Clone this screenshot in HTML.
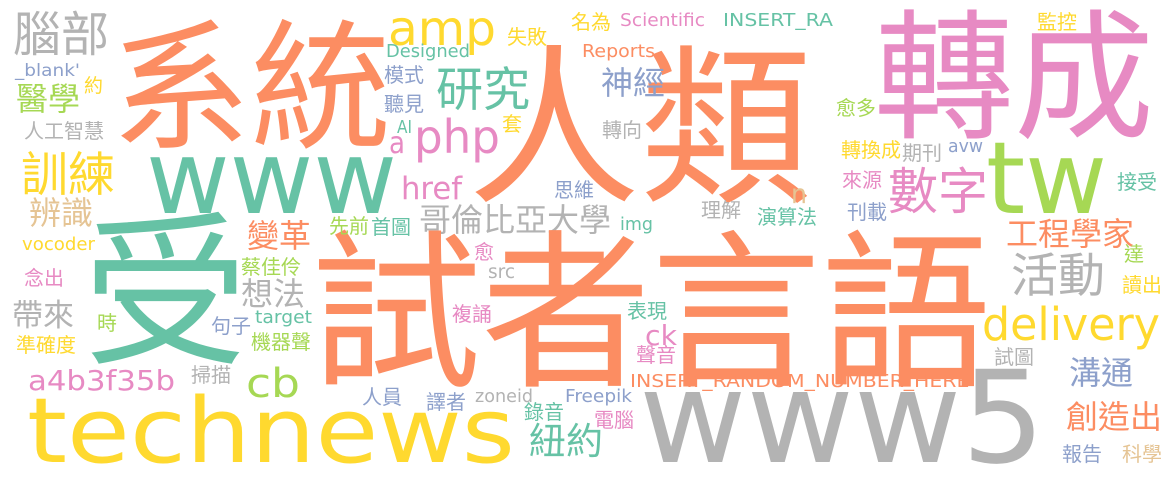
<!DOCTYPE html>
<html><head><meta charset="utf-8"><style>
html,body{margin:0;padding:0;background:#fff;}
svg{display:block}
.c{font-family:"Noto Sans CJK TC","Noto Sans CJK SC",sans-serif;}
.l{font-family:"DejaVu Sans","Liberation Sans",sans-serif;}
.o{fill:#fc8d62}.t{fill:#66c2a5}.b{fill:#8da0cb}.p{fill:#e78ac3}.g{fill:#a6d854}.y{fill:#ffd92f}.n{fill:#e5c494}.r{fill:#b3b3b3}
</style></head><body>
<svg width="1175" height="482" viewBox="0 0 1175 482" xmlns="http://www.w3.org/2000/svg">
<g class="c">
<text class="r" x="13" y="51" font-size="48">腦部</text>
<text class="o" x="111" y="137" font-size="140">系統</text>
<text class="y" x="507" y="44" font-size="20">失敗</text>
<text class="o" x="468" y="189" font-size="172">人類</text>
<text class="y" x="571" y="29" font-size="20">名為</text>
<text class="p" x="874" y="127" font-size="140">轉成</text>
<text class="y" x="1037" y="29" font-size="20">監控</text>
<text class="y" x="84" y="92" font-size="19">約</text>
<text class="g" x="16" y="110" font-size="32">醫學</text>
<text class="t" x="436" y="106" font-size="47">研究</text>
<text class="b" x="384" y="82" font-size="20">模式</text>
<text class="b" x="384" y="111" font-size="20">聽見</text>
<text class="b" x="601" y="94" font-size="32">神經</text>
<text class="r" x="24" y="138" font-size="20">人工智慧</text>
<text class="y" x="502" y="131" font-size="20">套</text>
<text class="g" x="836" y="115" font-size="20">愈多</text>
<text class="r" x="602" y="137" font-size="20">轉向</text>
<text class="y" x="21" y="191" font-size="47">訓練</text>
<text class="y" x="841" y="157" font-size="20">轉換成</text>
<text class="r" x="902" y="160" font-size="20">期刊</text>
<text class="p" x="888" y="209" font-size="50">數字</text>
<text class="p" x="842" y="187" font-size="20">來源</text>
<text class="t" x="1117" y="189" font-size="20">接受</text>
<text class="b" x="554" y="197" font-size="20">思維</text>
<text class="n" x="29" y="224" font-size="32">辨識</text>
<text class="r" x="419" y="231" font-size="32">哥倫比亞大學</text>
<text class="r" x="701" y="217" font-size="20">理解</text>
<text class="t" x="757" y="224" font-size="20">演算法</text>
<text class="b" x="847" y="219" font-size="20">刊載</text>
<text class="o" x="1006" y="245" font-size="32">工程學家</text>
<text class="t" x="83" y="351" font-size="165">受</text>
<text class="o" x="311" y="373" font-size="170">試者言語</text>
<text class="g" x="329" y="233" font-size="20">先前</text>
<text class="t" x="371" y="234" font-size="20">首圖</text>
<text class="o" x="247" y="247" font-size="32">變革</text>
<text class="r" x="1011" y="292" font-size="47">活動</text>
<text class="g" x="1124" y="261" font-size="20">達</text>
<text class="p" x="474" y="259" font-size="20">愈</text>
<text class="y" x="1122" y="292" font-size="20">讀出</text>
<text class="g" x="241" y="274" font-size="20">蔡佳伶</text>
<text class="p" x="24" y="285" font-size="20">念出</text>
<text class="r" x="241" y="305" font-size="32">想法</text>
<text class="t" x="627" y="318" font-size="20">表現</text>
<text class="r" x="12" y="326" font-size="31">帶來</text>
<text class="g" x="97" y="330" font-size="20">時</text>
<text class="p" x="452" y="321" font-size="20">複誦</text>
<text class="b" x="211" y="333" font-size="20">句子</text>
<text class="y" x="16" y="352" font-size="20">準確度</text>
<text class="g" x="251" y="349" font-size="20">機器聲</text>
<text class="p" x="636" y="362" font-size="20">聲音</text>
<text class="r" x="994" y="364" font-size="20">試圖</text>
<text class="b" x="1069" y="384" font-size="32">溝通</text>
<text class="r" x="191" y="382" font-size="20">掃描</text>
<text class="b" x="362" y="404" font-size="20">人員</text>
<text class="b" x="426" y="409" font-size="20">譯者</text>
<text class="t" x="524" y="419" font-size="20">錄音</text>
<text class="p" x="594" y="427" font-size="20">電腦</text>
<text class="o" x="1066" y="428" font-size="32">創造出</text>
<text class="t" x="529" y="454" font-size="37">紐約</text>
<text class="b" x="1062" y="461" font-size="20">報告</text>
<text class="n" x="1122" y="461" font-size="20">科學</text>
</g>
<g class="l">
<text class="y" x="388" y="45" font-size="48" textLength="108" lengthAdjust="spacingAndGlyphs">amp</text>
<text class="t" x="386" y="57" font-size="18" textLength="84" lengthAdjust="spacingAndGlyphs">Designed</text>
<text class="p" x="620" y="26" font-size="18" textLength="85" lengthAdjust="spacingAndGlyphs">Scientific</text>
<text class="t" x="723" y="26" font-size="18" textLength="110" lengthAdjust="spacingAndGlyphs">INSERT_RA</text>
<text class="o" x="582" y="57" font-size="18" textLength="73" lengthAdjust="spacingAndGlyphs">Reports</text>
<text class="b" x="15" y="76" font-size="17" textLength="65" lengthAdjust="spacingAndGlyphs">_blank'</text>
<text class="t" x="397" y="133" font-size="18" textLength="15" lengthAdjust="spacingAndGlyphs">AI</text>
<text class="p" x="389" y="153" font-size="30" textLength="16" lengthAdjust="spacingAndGlyphs">a</text>
<text class="p" x="414" y="153" font-size="46" textLength="86" lengthAdjust="spacingAndGlyphs">php</text>
<text class="t" x="146" y="213" font-size="102" textLength="251" lengthAdjust="spacingAndGlyphs">www</text>
<text class="p" x="401" y="199" font-size="31" textLength="61" lengthAdjust="spacingAndGlyphs">href</text>
<text class="b" x="948" y="152" font-size="18" textLength="35" lengthAdjust="spacingAndGlyphs">avw</text>
<text class="g" x="986" y="213" font-size="100" textLength="121" lengthAdjust="spacingAndGlyphs">tw</text>
<text class="n" x="791" y="203" font-size="27" textLength="16" lengthAdjust="spacingAndGlyphs">n</text>
<text class="t" x="620" y="230" font-size="18" textLength="33" lengthAdjust="spacingAndGlyphs">img</text>
<text class="y" x="22" y="250" font-size="18" textLength="73" lengthAdjust="spacingAndGlyphs">vocoder</text>
<text class="r" x="488" y="278" font-size="19" textLength="27" lengthAdjust="spacingAndGlyphs">src</text>
<text class="y" x="982" y="340" font-size="45" textLength="178" lengthAdjust="spacingAndGlyphs">delivery</text>
<text class="t" x="255" y="323" font-size="18" textLength="57" lengthAdjust="spacingAndGlyphs">target</text>
<text class="p" x="645" y="345" font-size="28" textLength="32" lengthAdjust="spacingAndGlyphs">ck</text>
<text class="p" x="28" y="390" font-size="28" textLength="147" lengthAdjust="spacingAndGlyphs">a4b3f35b</text>
<text class="g" x="246" y="397" font-size="40" textLength="54" lengthAdjust="spacingAndGlyphs">cb</text>
<text class="o" x="630" y="387" font-size="18" textLength="345" lengthAdjust="spacingAndGlyphs">INSERT_RANDOM_NUMBER_HERE'</text>
<text class="r" x="639" y="462" font-size="128" textLength="406" lengthAdjust="spacingAndGlyphs">www5</text>
<text class="r" x="475" y="402" font-size="18" textLength="58" lengthAdjust="spacingAndGlyphs">zoneid</text>
<text class="b" x="565" y="402" font-size="18" textLength="67" lengthAdjust="spacingAndGlyphs">Freepik</text>
<text class="y" x="27" y="462" font-size="90" textLength="488" lengthAdjust="spacingAndGlyphs">technews</text>
</g>
</svg>
</body></html>
